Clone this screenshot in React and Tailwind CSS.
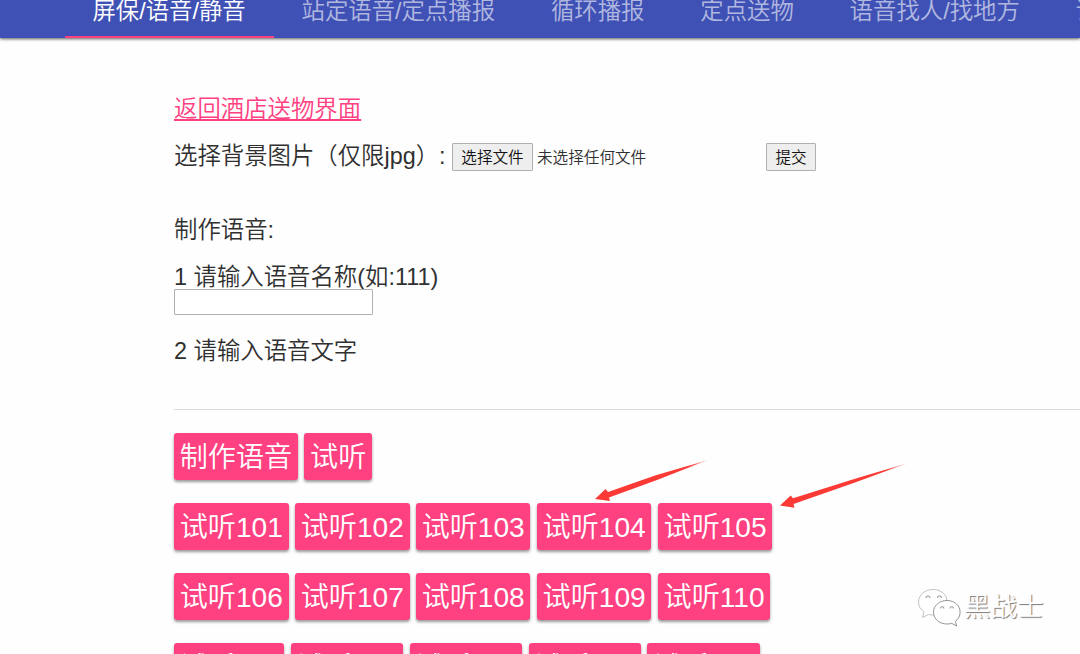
const tabs = ['屏保/语音/静音', '站定语音/定点播报', '循环播报', '定点送物', '语音找人/找地方', '语音设置'];

const rows = [
  ['制作语音', '试听'],
  ['试听101', '试听102', '试听103', '试听104', '试听105'],
  ['试听106', '试听107', '试听108', '试听109', '试听110'],
  ['试听111', '试听112', '试听113', '试听114', '试听115'],
];

const TabBar = () => (
  <nav className="flex h-[38px] shrink-0 items-end overflow-x-clip bg-[#3f51b5] pl-[64.5px] shadow-[0_1px_3px_rgba(0,0,0,0.65)]">
    {tabs.map((tab, index) => (
      <a
        key={tab}
        className={`flex h-[56px] shrink-0 items-center border-b-2 px-[27.9px] pt-[6px] whitespace-nowrap ${
          index === 0 ? 'border-[#ff4081] text-white' : 'border-transparent text-white/60'
        }`}
      >
        {tab}
      </a>
    ))}
  </nav>
);

const SmallButton = ({ children, className }) => (
  <button
    className={`h-[28px] shrink-0 rounded-[1px] border border-[#b0b0b0] bg-[#eeeeee] pt-[2px] text-[15.6px] leading-none text-[#111] ${className}`}
  >
    {children}
  </button>
);

const PinkButton = ({ children }) => (
  <button className="h-[47px] shrink-0 rounded-[3px] bg-[#ff4081] px-[5.75px] pt-px text-[28.1px] leading-[47px] whitespace-nowrap text-white shadow-[0_2px_3px_rgba(0,0,0,0.4)]">
    {children}
  </button>
);

// Flecha roja que apunta hacia un botón
const Arrow = ({ className, id }) => (
  <svg className={`absolute ${className}`} width="130" height="50" viewBox="0 0 130 50">
    <defs>
      <linearGradient id={id} x1="0" x2="1">
        <stop offset="0.82" stopColor="#fb3a36" />
        <stop offset="1" stopColor="#fb3a36" stopOpacity="0.35" />
      </linearGradient>
    </defs>
    {id === 'arrow-a' ? (
      <path d="M0 39 L10.5 29 L13 32 L60 15.5 L113 0 L62 20 L14 37.500 L15 41 Z" fill={`url(#${id})`} />
    ) : (
      <path d="M0 42.500 L10.700 32.500 L13 35.300 L75 15.800 L128 0 L75 19.500 L13.500 41 L14.500 44.700 Z" fill={`url(#${id})`} />
    )}
  </svg>
);

const Watermark = () => (
  <div className="absolute top-[585px] left-[916px] flex items-center">
    <svg width="46" height="42" viewBox="0 0 46 42" fill="white" stroke="#bbb" strokeWidth="0.9">
      <path d="M17 3.5C9 3.5 2.5 9 2.5 16c0 4 2 7.500 5.500 10L6.500 31.500l6-3c2 .6 4 .7 6 .5L31 13C29.500 7.500 24 3.500 17 3.500Z" />
      <path d="M31 14.500c-7.500 0-13.500 5-13.500 11.700S23.500 38 31 38c1.600 0 3.200-.2 4.600-.7l5 2.700-1.200-4.700c3-2.100 4.700-5.300 4.700-9.100 0-6.700-5.600-11.700-13.100-11.700Z" stroke="#888" />
      <g fill="none" stroke="#999" strokeWidth="1.1">
        <path d="M10 12a2 2 0 1 1 4 0M21.500 12a2 2 0 1 1 4 0M24.500 22.500a1.700 1.700 0 1 1 3.400 0M34 22.500a1.700 1.700 0 1 1 3.400 0" />
      </g>
    </svg>
    <span className="ml-[2px] text-[26.5px] leading-[44px] whitespace-nowrap text-white [text-shadow:1px_1px_1px_#777]">
      黑战士
    </span>
  </div>
);

const App = () => (
  <div className="relative flex h-[654px] w-full flex-col overflow-hidden bg-[#fefefe] font-['Liberation_Sans','Noto_Sans_CJK_SC',sans-serif] text-[23.4px] font-[350] text-[#303030]">
    <TabBar />

    <main className="flex flex-col pl-[174px]">
      <a className="mt-[53px] flex h-[36px] items-center self-start leading-[36px] whitespace-nowrap text-[#ff4081] underline decoration-2 underline-offset-2">
        返回酒店送物界面
      </a>

      <div className="mt-[12px] flex h-[36px] items-center whitespace-nowrap">
        <span className="w-[278px] shrink-0">选择背景图片（仅限jpg）:</span>
        <SmallButton className="w-[81px]">选择文件</SmallButton>
        <span className="ml-[4px] w-[229px] pt-[2px] text-[15.6px]">未选择任何文件</span>
        <SmallButton className="w-[50px]">提交</SmallButton>
      </div>

      <p className="mt-[37px] leading-[36px]">制作语音:</p>

      <label className="mt-[11px] leading-[36px]">1 请输入语音名称(如:111)</label>
      <input className="mt-[-6px] h-[26px] w-[199px] rounded-[1px] border border-[#b0b0b0] bg-white text-[15.6px]" />

      <p className="mt-[18px] leading-[36px]">2 请输入语音文字</p>

      <hr className="mt-[40px] border-t border-[#dcdcdc]" />

      <div className="mt-[23px] flex flex-col gap-[23px]">
        {rows.map((row) => (
          <div key={row[0]} className="flex gap-[6.4px]">
            {row.map((label) => (
              <PinkButton key={label}>{label}</PinkButton>
            ))}
          </div>
        ))}
      </div>
    </main>

    <Arrow id="arrow-a" className="top-[460px] left-[595px]" />
    <Arrow id="arrow-b" className="top-[463px] left-[780px]" />
    <Watermark />
  </div>
);

export default App;
